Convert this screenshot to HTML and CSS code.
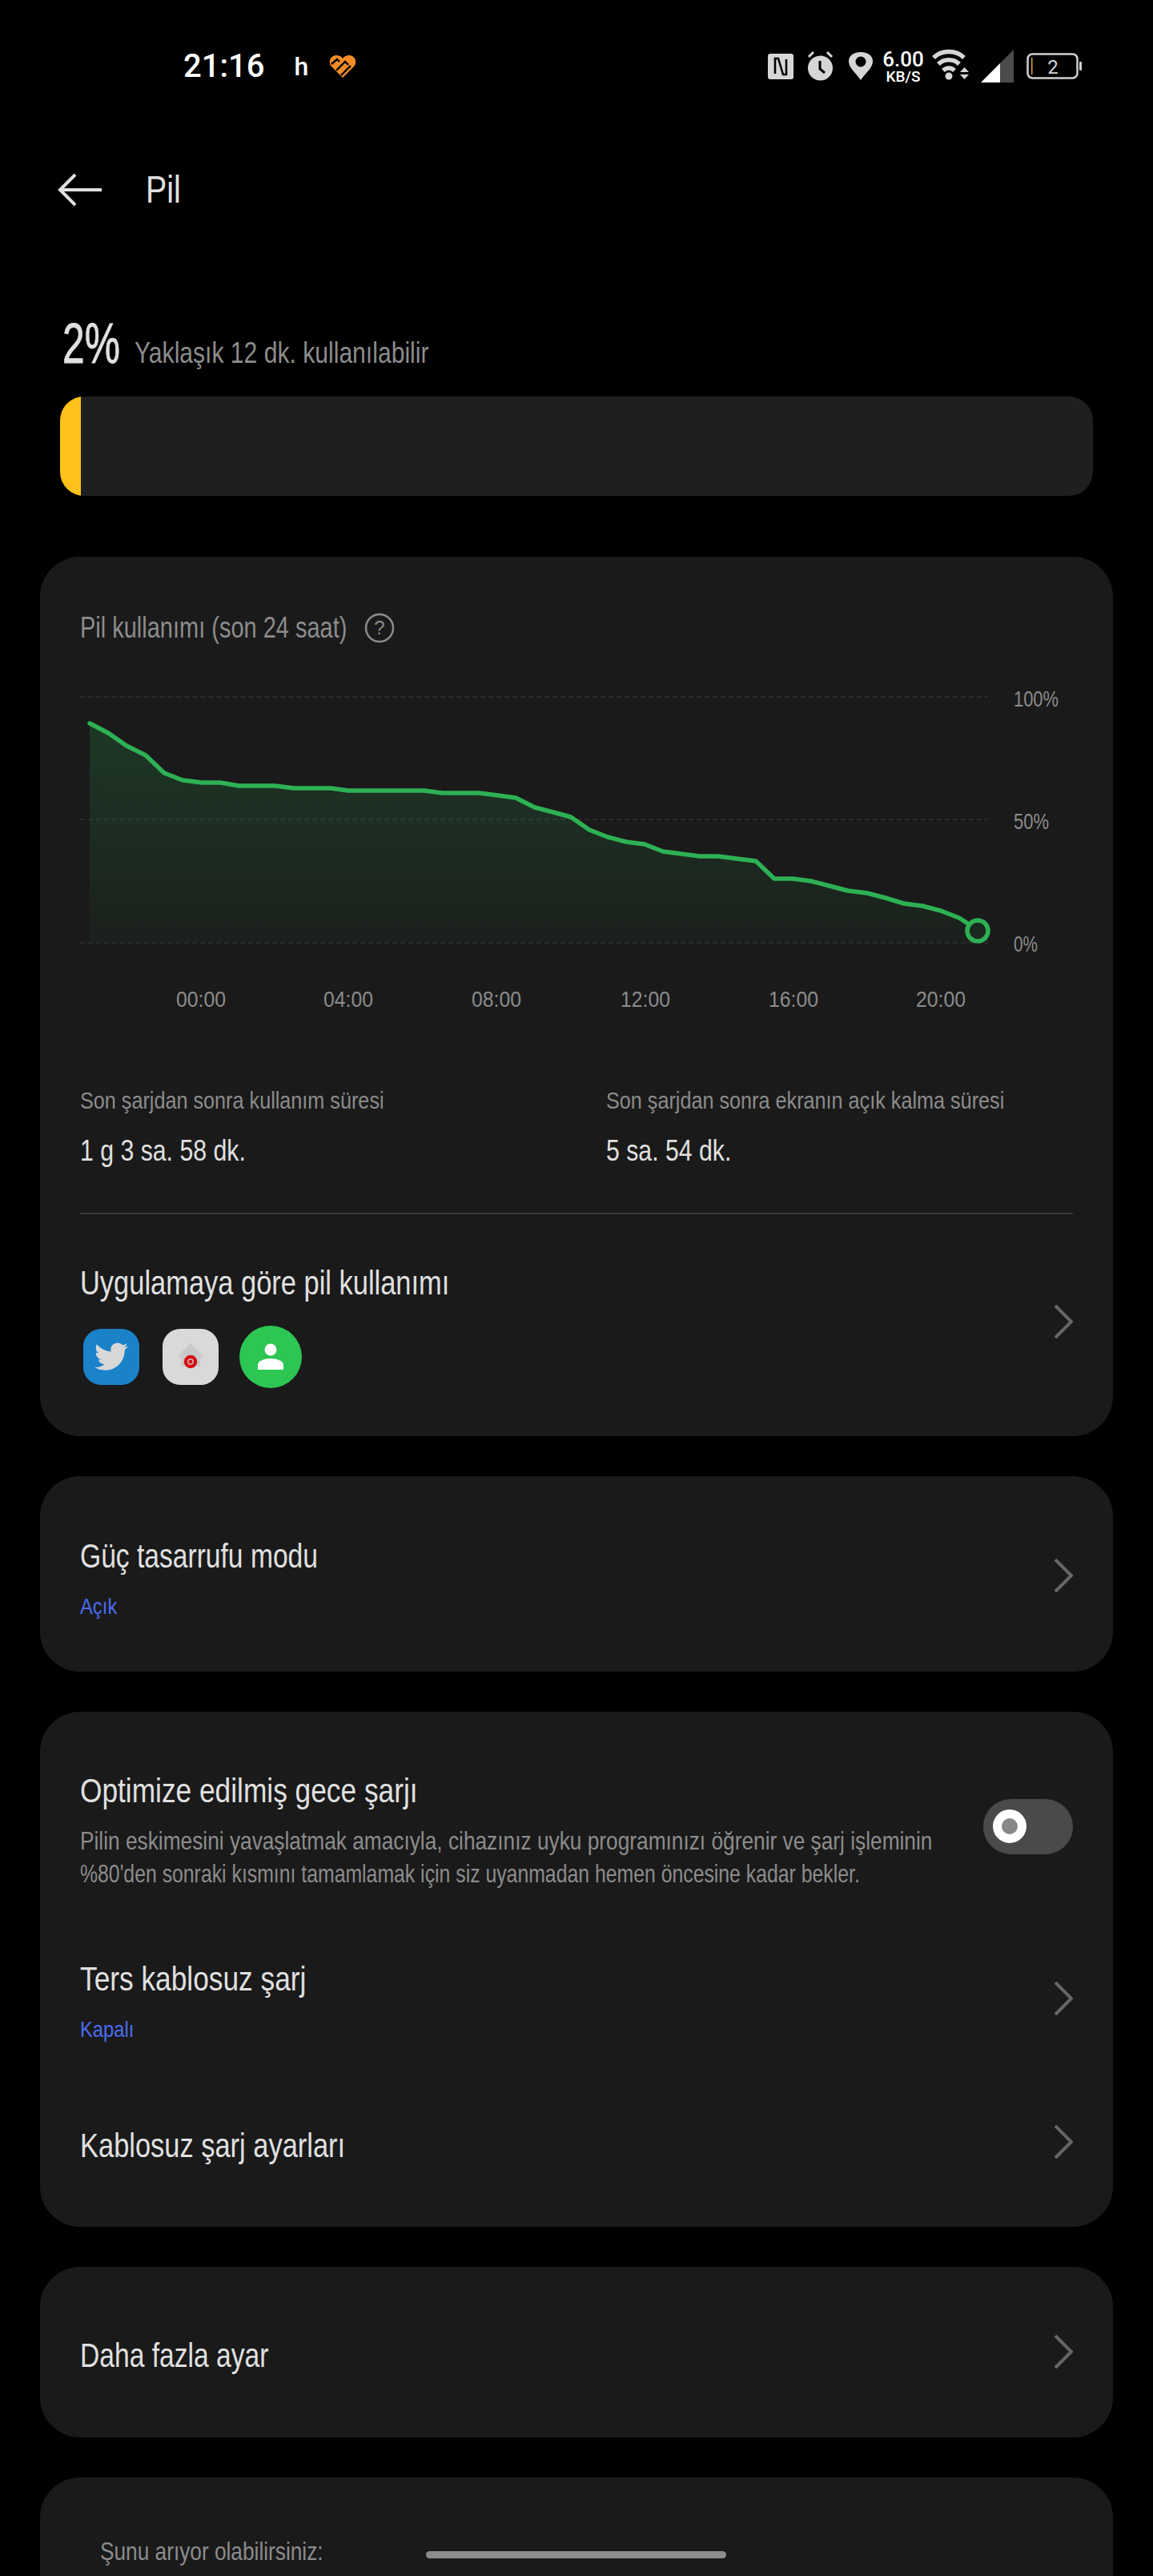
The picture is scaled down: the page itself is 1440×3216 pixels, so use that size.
FILE: index.html
```html
<!DOCTYPE html>
<html lang="tr">
<head>
  <meta charset="utf-8">
  <title>Pil</title>
  <meta name="viewport" content="width=device-width, initial-scale=1">
  <link rel="stylesheet" href="styles.css">
</head>
<body>
  <div class="page">

    <div class="status">
      <div class="status-left">
        <span class="clock">21:16</span>
        <span class="status-h">h</span>
        <svg class="heart" width="34" height="28" viewBox="0 0 34 28">
          <path d="M17 28 L3 14 C-2 8 2 0 9 0 C12 0 15 1 17 4 C19 1 22 0 25 0 C32 0 36 8 31 14 Z" fill="#f28c28"/>
          <path d="M3 11 L10 5 L13 8 M9 19 L20 8 L24 12 M15 25 L27 13" fill="none" stroke="#000" stroke-width="2.400"/>
        </svg>
      </div>
      <div class="status-right">
        <svg class="ic-nfc" width="32" height="44" viewBox="0 0 32 44">
          <rect x="0" y="6" width="32" height="32" rx="3" fill="#d6d6d6"/>
          <path d="M9 31 V12 H13 L19 32 H23 V13" fill="none" stroke="#000" stroke-width="2.600"/>
        </svg>
        <svg class="ic-alarm" width="33" height="44" viewBox="0 0 33 44">
          <circle cx="16.500" cy="24" r="15.500" fill="#d6d6d6"/>
          <path d="M2 10 L8 4 M31 10 L25 4" stroke="#d6d6d6" stroke-width="3"/>
          <path d="M16 15 V25 L22 30" fill="none" stroke="#000" stroke-width="3"/>
        </svg>
        <svg class="ic-pin" width="30" height="44" viewBox="0 0 30 44">
          <path d="M15 39 C9 30 0 24 0 15.500 C0 8 7 4 15 4 C23 4 30 8 30 15.500 C30 24 21 30 15 39 Z" fill="#d6d6d6"/>
          <circle cx="15" cy="16" r="6.500" fill="#000"/>
        </svg>
        <div class="speed">
          <span class="speed-num">6.00</span>
          <span class="speed-unit">KB/S</span>
        </div>
        <svg class="ic-wifi" width="46" height="44" viewBox="0 0 46 44">
          <g fill="none" stroke="#d6d6d6" stroke-width="5.500">
            <path d="M2 11 C12 1 30 1 40 11"/>
            <path d="M8 19 C15 12 27 12 34 19"/>
            <path d="M14 27 C18 23 24 23 28 27"/>
          </g>
          <circle cx="21" cy="34" r="4.500" fill="#d6d6d6"/>
          <path d="M35 29 L40.500 23 L46 29 Z M35 32 H46 L40.500 38 Z" fill="#d6d6d6"/>
        </svg>
        <svg class="ic-signal" width="41" height="44" viewBox="0 0 41 44">
          <path d="M0 42 L24 18 V42 Z" fill="#fff"/>
          <path d="M24 18 L41 1 V42 H24 Z" fill="#4b4b4b"/>
        </svg>
        <svg class="ic-battery" width="69" height="44" viewBox="0 0 69 44">
          <rect x="1.500" y="6.500" width="62" height="30" rx="6" fill="none" stroke="#cfcfcf" stroke-width="2.500"/>
          <rect x="66" y="16" width="3" height="11" rx="1" fill="#cfcfcf"/>
          <rect x="6" y="11" width="1.500" height="21" fill="#e0a030"/>
          <text class="battery-num" x="33" y="31" text-anchor="middle">2</text>
        </svg>
      </div>
    </div>

    <div class="appbar">
      <svg width="56" height="42" viewBox="0 0 56 42">
        <path d="M55 21 H3 M22 2 L3 21 L22 40" fill="none" stroke="#e0e0e0" stroke-width="4"/>
      </svg>
      <span class="appbar-title">Pil</span>
    </div>

    <div class="summary">
      <span class="percent">2%</span>
      <span class="remain">Yaklaşık 12 dk. kullanılabilir</span>
    </div>
    <div class="level"><div class="level-fill"></div></div>

    <section class="card card-usage">
      <div class="usage-head">
        <span class="usage-title">Pil kullanımı (son 24 saat)</span>
        <svg width="38" height="38" viewBox="0 0 38 38">
          <circle cx="19" cy="19" r="17" fill="none" stroke="#8c8c8c" stroke-width="2.500"/>
          <text class="help-mark" x="19" y="27" text-anchor="middle">?</text>
        </svg>
      </div>

      <svg class="chart" width="1240" height="420" viewBox="100 850 1240 420">
        <defs>
          <linearGradient id="area" x1="0" y1="0" x2="0" y2="1">
            <stop offset="0" stop-color="#2db154" stop-opacity="0.2"/>
            <stop offset="1" stop-color="#2db154" stop-opacity="0.04"/>
          </linearGradient>
        </defs>
        <g class="grid">
          <path d="M100 870 H1234"/>
          <path d="M100 1023 H1234"/>
          <path d="M100 1177 H1234"/>
        </g>
        <path fill="url(#area)" d="M112 903 L135 915 L158 931 L182 943 L205 965 L228 974 L252 977 L275 977 L298 981 L343 981 L367 984 L413 984 L435 987 L530 987 L552 990 L598 990 L622 993 L644 996 L668 1008 L691 1014 L713 1020 L736 1036 L759 1045 L782 1051 L805 1054 L828 1063 L851 1066 L874 1069 L897 1069 L920 1072 L944 1075 L967 1097 L990 1097 L1013 1100 L1036 1106 L1059 1112 L1083 1115 L1106 1121 L1129 1128 L1152 1131 L1175 1137 L1198 1146 L1221 1162 V1177 H112 Z"/>
        <path class="line" d="M112 903 L135 915 L158 931 L182 943 L205 965 L228 974 L252 977 L275 977 L298 981 L343 981 L367 984 L413 984 L435 987 L530 987 L552 990 L598 990 L622 993 L644 996 L668 1008 L691 1014 L713 1020 L736 1036 L759 1045 L782 1051 L805 1054 L828 1063 L851 1066 L874 1069 L897 1069 L920 1072 L944 1075 L967 1097 L990 1097 L1013 1100 L1036 1106 L1059 1112 L1083 1115 L1106 1121 L1129 1128 L1152 1131 L1175 1137 L1198 1146 L1212 1155"/>
        <circle cx="1221" cy="1162" r="13" fill="#1b2a1f" stroke="#2db154" stroke-width="5.500"/>
        <g class="axis">
          <text x="1266" y="882" textLength="56" lengthAdjust="spacingAndGlyphs">100%</text>
          <text x="1266" y="1035" textLength="44" lengthAdjust="spacingAndGlyphs">50%</text>
          <text x="1266" y="1188" textLength="30" lengthAdjust="spacingAndGlyphs">0%</text>
        </g>
        <g class="axis axis-x">
          <text x="251" y="1257" textLength="62" lengthAdjust="spacingAndGlyphs">00:00</text>
          <text x="435" y="1257" textLength="62" lengthAdjust="spacingAndGlyphs">04:00</text>
          <text x="620" y="1257" textLength="62" lengthAdjust="spacingAndGlyphs">08:00</text>
          <text x="806" y="1257" textLength="62" lengthAdjust="spacingAndGlyphs">12:00</text>
          <text x="991" y="1257" textLength="62" lengthAdjust="spacingAndGlyphs">16:00</text>
          <text x="1175" y="1257" textLength="62" lengthAdjust="spacingAndGlyphs">20:00</text>
        </g>
      </svg>

      <div class="stats">
        <div>
          <div class="stat-label">Son şarjdan sonra kullanım süresi</div>
          <div class="stat-value">1 g 3 sa. 58 dk.</div>
        </div>
        <div>
          <div class="stat-label">Son şarjdan sonra ekranın açık kalma süresi</div>
          <div class="stat-value">5 sa. 54 dk.</div>
        </div>
      </div>

      <div class="apps-row">
        <div class="row-text">
          <div class="row-title">Uygulamaya göre pil kullanımı</div>
          <div class="apps">
            <div class="app app-twitter">
              <svg width="42" height="36" viewBox="0 0 24 20">
                <path transform="translate(0 -2.200)" fill="#d8d8d8" d="M23.953 4.570a10 10 0 01-2.825.775 4.958 4.958 0 002.163-2.723c-.951.555-2.005.959-3.127 1.184a4.920 4.920 0 00-8.384 4.482C7.690 8.095 4.067 6.130 1.640 3.162a4.822 4.822 0 00-.666 2.475c0 1.710.870 3.213 2.188 4.096a4.904 4.904 0 01-2.228-.616v.060a4.923 4.923 0 003.946 4.827 4.996 4.996 0 01-2.212.085 4.936 4.936 0 004.604 3.417 9.867 9.867 0 01-6.102 2.105c-.390 0-.779-.023-1.170-.067a13.995 13.995 0 007.557 2.209c9.053 0 13.998-7.496 13.998-13.985 0-.210 0-.420-.015-.630A9.935 9.935 0 0024 4.590z"/>
              </svg>
            </div>
            <div class="app app-home">
              <svg width="70" height="70" viewBox="0 0 70 70">
                <path d="M35 18 L52 35 H47 V47 H23 V35 H18 Z" fill="#c9c9c9"/>
                <circle cx="35" cy="41" r="6" fill="#d9d9d9" stroke="#d40d12" stroke-width="4.500"/>
                <circle cx="35" cy="41" r="2.500" fill="#d40d12"/>
              </svg>
            </div>
            <div class="app-contact">
              <svg width="78" height="78" viewBox="0 0 78 78">
                <circle cx="39" cy="30" r="7.500" fill="#fff"/>
                <path d="M23 55 V49 C23 44 31 41 39 41 C47 41 55 44 55 49 V55 Z" fill="#fff"/>
              </svg>
            </div>
          </div>
        </div>
        <svg class="chev" width="24" height="42" viewBox="0 0 24 42"><path d="M2 1 L22 21 L2 41" fill="none" stroke="#666" stroke-width="4"/></svg>
      </div>
    </section>

    <section class="card card-saver">
      <div class="row">
        <div class="row-text">
          <div class="row-title title-tight">Güç tasarrufu modu</div>
          <div class="row-sub">Açık</div>
        </div>
        <svg class="chev" width="24" height="42" viewBox="0 0 24 42"><path d="M2 1 L22 21 L2 41" fill="none" stroke="#666" stroke-width="4"/></svg>
      </div>
    </section>

    <section class="card card-charge">
      <div class="row">
        <div class="row-text">
          <div class="row-title title-wide">Optimize edilmiş gece şarjı</div>
          <div class="row-desc desc-first">Pilin eskimesini yavaşlatmak amacıyla, cihazınız uyku programınızı öğrenir ve şarj işleminin</div>
          <div class="row-desc desc-second">%80'den sonraki kısmını tamamlamak için siz uyanmadan hemen öncesine kadar bekler.</div>
        </div>
        <div class="toggle"><span class="knob"></span></div>
      </div>
      <div class="row row-wireless">
        <div class="row-text">
          <div class="row-title title-wide">Ters kablosuz şarj</div>
          <div class="row-sub">Kapalı</div>
        </div>
        <svg class="chev" width="24" height="42" viewBox="0 0 24 42"><path d="M2 1 L22 21 L2 41" fill="none" stroke="#666" stroke-width="4"/></svg>
      </div>
      <div class="row row-settings">
        <div class="row-text">
          <div class="row-title">Kablosuz şarj ayarları</div>
        </div>
        <svg class="chev" width="24" height="42" viewBox="0 0 24 42"><path d="M2 1 L22 21 L2 41" fill="none" stroke="#666" stroke-width="4"/></svg>
      </div>
    </section>

    <section class="card card-more">
      <div class="row">
        <div class="row-text">
          <div class="row-title title-tight">Daha fazla ayar</div>
        </div>
        <svg class="chev" width="24" height="42" viewBox="0 0 24 42"><path d="M2 1 L22 21 L2 41" fill="none" stroke="#666" stroke-width="4"/></svg>
      </div>
    </section>

    <section class="card card-search">
      <div class="search-title">Şunu arıyor olabilirsiniz:</div>
    </section>

    <div class="home-handle"></div>
  </div>
</body>
</html>
```

FILE: styles.css
```css
* {
  box-sizing: border-box;
}

html, body {
  margin: 0;
  padding: 0;
  background: #000;
}

.page {
  position: relative;
  width: 1440px;
  height: 3216px;
  overflow: hidden;
  background: #000;
  color: #e0e0e0;
  font-family: "Liberation Sans", Arial, sans-serif;
}

/* status bar */
.status {
  height: 166px;
  display: flex;
  align-items: center;
  justify-content: space-between;
  padding: 0 89px 0 229px;
  font-family: Roboto, sans-serif;
  color: #fff;
}

.status-left {
  display: flex;
  align-items: center;
}

.clock {
  font-size: 40px;
  line-height: 48px;
  font-weight: 500;
}

.status-h {
  margin-left: 37px;
  font-size: 32px;
  line-height: 48px;
  font-weight: 500;
}

.heart {
  margin-left: 26px;
}

.status-right {
  display: flex;
  align-items: center;
}

.ic-alarm { margin-left: 17px; }
.ic-pin { margin-left: 19px; }
.speed { margin-left: 12px; }
.ic-wifi { margin-left: 10px; }
.ic-signal { margin-left: 15px; }
.ic-battery { margin-left: 16px; }

.speed {
  width: 52px;
  display: flex;
  flex-direction: column;
  align-items: center;
}

.speed-num {
  font-size: 26px;
  line-height: 26px;
  font-weight: 500;
}

.speed-unit {
  font-size: 19px;
  line-height: 18px;
  font-weight: 500;
}

.battery-num {
  font-size: 24px;
  fill: #d6d6d6;
}

/* header */
.appbar {
  height: 74px;
  margin-top: 34px;
  padding-left: 72px;
  display: flex;
  align-items: center;
}

.appbar-title {
  margin-left: 54px;
  font-size: 48px;
  line-height: 74px;
  transform: scaleX(.82);
  transform-origin: left center;
}

.summary {
  margin-top: 115px;
  padding-left: 78px;
  display: flex;
  align-items: baseline;
}

.percent {
  width: 90px;
  font-size: 70px;
  line-height: 80px;
  -webkit-text-stroke: .8px #e0e0e0;
  transform: scaleX(.71);
  transform-origin: left center;
}

.remain {
  font-size: 36px;
  color: #8c8c8c;
  white-space: nowrap;
  transform: scaleX(.836);
  transform-origin: left center;
}

.level {
  height: 124px;
  margin: 26px 75px 0;
  background: #1f1f1f;
  border-radius: 30px;
  overflow: hidden;
}

.level-fill {
  width: 26px;
  height: 100%;
  background: #ffc11a;
}

/* cards */
.card {
  margin: 50px 50px 0;
  padding: 0 50px;
  background: #1a1a1a;
  border-radius: 50px;
}

.card-usage {
  margin-top: 76px;
  height: 1098px;
  padding-top: 65px;
}

.usage-head {
  display: flex;
  align-items: center;
  gap: 20px;
}

.usage-title {
  width: 335px;
  font-size: 36px;
  line-height: 48px;
  color: #8c8c8c;
  white-space: nowrap;
  transform: scaleX(.805);
  transform-origin: left center;
}

.help-mark {
  font-size: 24px;
  fill: #8c8c8c;
}

.chart {
  display: block;
  margin-top: 42px;
}

.grid path {
  fill: none;
  stroke: #2b2b2b;
  stroke-width: 2;
  stroke-dasharray: 6 4;
}

.line {
  fill: none;
  stroke: #2db154;
  stroke-width: 5.5;
  stroke-linejoin: round;
  stroke-linecap: round;
}

.axis text {
  font-size: 28px;
  fill: #8c8c8c;
}

.axis-x text {
  text-anchor: middle;
}

.stats {
  display: grid;
  grid-template-columns: 657px 583px;
  padding-top: 82px;
  padding-bottom: 55px;
  border-bottom: 2px solid #3a3a3a;
}

.stat-label {
  font-size: 30px;
  line-height: 44px;
  color: #8c8c8c;
  white-space: nowrap;
  transform: scaleX(.84);
  transform-origin: left center;
}

.stat-value {
  margin-top: 19px;
  font-size: 36px;
  line-height: 44px;
  white-space: nowrap;
  transform: scaleX(.84);
  transform-origin: left center;
}

.apps-row {
  display: flex;
  align-items: center;
  justify-content: space-between;
  padding-top: 61px;
}

.row {
  display: flex;
  align-items: center;
  justify-content: space-between;
}

.row-text {
  flex: 1;
  min-width: 0;
}

.row-title {
  font-size: 42px;
  line-height: 50px;
  white-space: nowrap;
  transform: scaleX(.82);
  transform-origin: left center;
}

.title-tight {
  transform: scaleX(.8);
}

.title-wide {
  transform: scaleX(.84);
}

.row-sub {
  margin-top: 18px;
  font-size: 28px;
  line-height: 40px;
  color: #4a6cf0;
  transform: scaleX(.85);
  transform-origin: left center;
}

.row-desc {
  font-size: 32px;
  line-height: 41px;
  color: #8c8c8c;
  white-space: nowrap;
  transform-origin: left center;
}

.desc-first {
  margin-top: 17px;
  transform: scaleX(.821);
}

.desc-second {
  transform: scaleX(.775);
}

.chev {
  flex: none;
  margin-bottom: 10px;
}

.apps {
  margin-top: 28px;
  padding-left: 4px;
  display: flex;
  align-items: center;
}

.app {
  width: 70px;
  height: 70px;
  border-radius: 22px;
  display: flex;
  align-items: center;
  justify-content: center;
}

.app-twitter {
  background: #1a82c8;
}

.app-home {
  margin-left: 29px;
  background: #d9d9d9;
}

.app-contact {
  width: 78px;
  height: 78px;
  margin-left: 26px;
  border-radius: 50%;
  background: #2dc653;
}

.card-saver {
  height: 244px;
  padding-top: 75px;
}

.card-charge {
  height: 643px;
  padding-top: 74px;
}

.row-wireless {
  margin-top: 86px;
}

.row-settings {
  margin-top: 99px;
}

.toggle {
  flex: none;
  width: 112px;
  height: 69px;
  margin-bottom: 11px;
  padding-left: 12px;
  display: flex;
  align-items: center;
  background: #4a4a4a;
  border-radius: 35px;
}

.knob {
  width: 42px;
  height: 42px;
  border: 11px solid #fff;
  border-radius: 50%;
  background: #888;
}

.card-more {
  height: 213px;
  padding-top: 85px;
}

.card-search {
  height: 300px;
  padding: 70px 75px 0;
}

.search-title {
  font-size: 32px;
  line-height: 44px;
  color: #8c8c8c;
  white-space: nowrap;
  transform: scaleX(.82);
  transform-origin: left center;
}

.home-handle {
  position: absolute;
  left: 532px;
  bottom: 22px;
  width: 375px;
  height: 9px;
  border-radius: 5px;
  background: #8c8c8c;
}
```
